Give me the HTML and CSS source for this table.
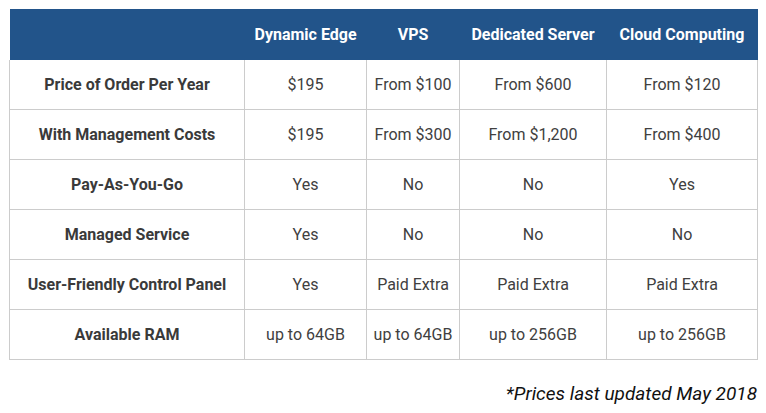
FILE: index.html
```html
<!DOCTYPE html>
<html>
<head>
<meta charset="utf-8">
<link rel="stylesheet" href="styles.css">
</head>
<body>
<div class="wrap">
<table class="cmp">
  <colgroup>
    <col class="c1"><col class="c2"><col class="c3"><col class="c4"><col class="c5">
  </colgroup>
  <thead>
    <tr><th></th><th>Dynamic Edge</th><th>VPS</th><th>Dedicated Server</th><th>Cloud Computing</th></tr>
  </thead>
  <tbody>
    <tr><td class="lbl">Price of Order Per Year</td><td>$195</td><td>From $100</td><td>From $600</td><td>From $120</td></tr>
    <tr><td class="lbl">With Management Costs</td><td>$195</td><td>From $300</td><td>From $1,200</td><td>From $400</td></tr>
    <tr><td class="lbl">Pay-As-You-Go</td><td>Yes</td><td>No</td><td>No</td><td>Yes</td></tr>
    <tr><td class="lbl">Managed Service</td><td>Yes</td><td>No</td><td>No</td><td>No</td></tr>
    <tr><td class="lbl">User-Friendly Control Panel</td><td>Yes</td><td>Paid Extra</td><td>Paid Extra</td><td>Paid Extra</td></tr>
    <tr><td class="lbl">Available RAM</td><td>up to 64GB</td><td>up to 64GB</td><td>up to 256GB</td><td>up to 256GB</td></tr>
  </tbody>
</table>
<p class="note">*Prices last updated May 2018</p>
</div>
</body>
</html>
```
FILE: styles.css
```css
html, body {
  margin: 0;
  padding: 0;
  background: #ffffff;
}
.wrap {
  padding: 9px 9px 0 9px;
  width: 748px;
  font-family: Roboto, "Liberation Sans", sans-serif;
}
.cmp {
  width: 748px;
  border-collapse: collapse;
  table-layout: fixed;
  font-size: 16px;
  line-height: 18px;
  color: #404040;
}
.c1 { width: 235px; }
.c2 { width: 122px; }
.c3 { width: 93px; }
.c4 { width: 147px; }
.c5 { width: 151px; }
.cmp th {
  background: #22548a;
  color: #ffffff;
  font-weight: 700;
  height: 51px;
  padding: 0;
  text-align: center;
  vertical-align: middle;
  white-space: nowrap;
}
.cmp td {
  border: 1px solid #cccccc;
  height: 49px;
  padding: 0;
  text-align: center;
  vertical-align: middle;
  white-space: nowrap;
}
.cmp tbody tr:first-child td {
  border-top: none;
}
.cmp td.lbl {
  font-weight: 700;
  color: #3a3a3a;
}
.note {
  margin: 23px 0 0 0;
  text-align: right;
  font-style: italic;
  font-size: 19px;
  line-height: 22px;
  color: #111111;
}
```
